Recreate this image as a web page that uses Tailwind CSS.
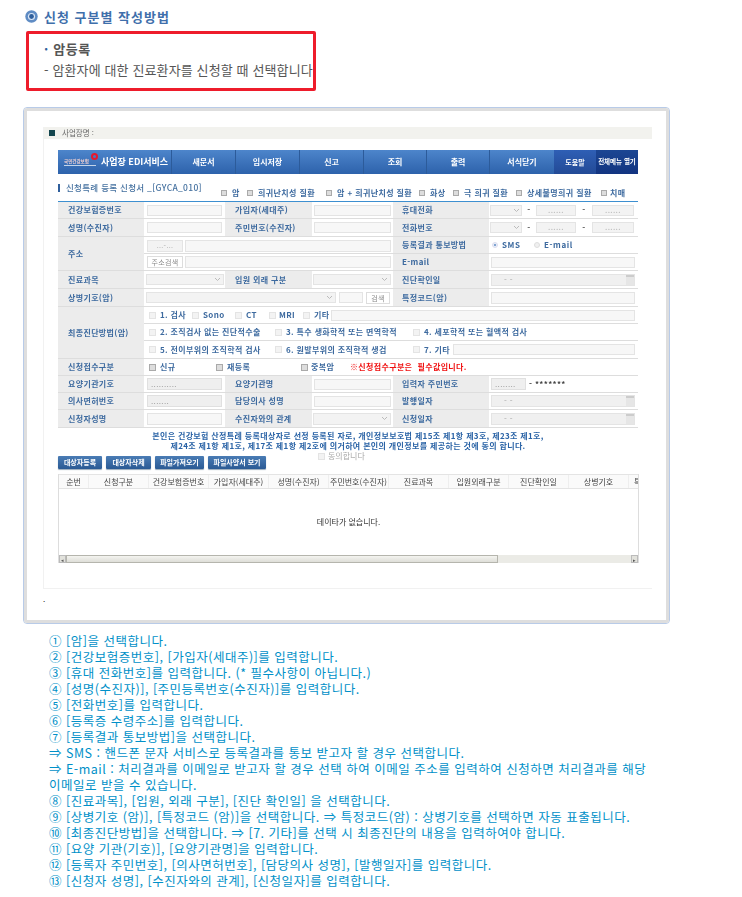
<!DOCTYPE html>
<html lang="ko">
<head>
    <meta charset="UTF-8">
    <title>신청 구분별 작성방법</title>
    <script src="https://cdn.jsdelivr.net/npm/@tailwindcss/browser@4"></script>
</head>
<body class="bg-white font-['Noto_Sans_CJK_KR','Noto_Sans',sans-serif] overflow-hidden">
    <div class="w-[742px] h-[897px] pl-[23px] pt-[8px]">
        <!-- Heading -->
        <div class="flex items-center h-[16px] pl-[2px] gap-[6px]">
            <svg width="13" height="13" viewBox="0 0 13 13"><circle cx="6.5" cy="6.5" r="6.2" fill="#5f8cc4"/><circle cx="6.5" cy="6.5" r="3.6" fill="#dbe6f5"/><circle cx="6.5" cy="6.5" r="2.4" fill="#2f5f9c"/></svg>
            <h2 class="text-[13px] leading-none font-bold tracking-[1px] text-[#3f6fab]">신청 구분별 작성방법</h2>
        </div>

        <!-- Red box -->
        <div class="ml-[3px] mt-[7px] w-[290px] h-[60px] border-[3px] border-[#ee1c2b] rounded-[2px] pl-[15px] pt-[4px] text-[#555]">
            <p class="text-[13px] font-bold leading-[21px] whitespace-nowrap"><span class="text-[#2f5f9c] mr-[5px]">·</span><span class="tracking-[0.5px]">암등록</span></p>
            <p class="text-[13px] leading-[21px] tracking-[0.12px] whitespace-nowrap">- 암환자에 대한 진료환자를 신청할 때 선택합니다</p>
        </div>

        <!-- Screenshot frame -->
        <div class="mt-[16px] w-[647px] h-[517px] rounded-[4px] border border-[#b8cbe8]">
            <div class="h-full border-[3px] border-t-[3px] border-[#dedede] rounded-[3px] pt-[16px] pl-[16px] bg-white">
                <div class="w-[609px] h-[462px] border-b border-l border-[#f1f1f1] blur-[0.3px]">
                    <div class="h-[12px] bg-[#f2f2ee] flex items-center pl-[5px] gap-[7px] text-[7.5px] text-[#666]">
                        <span class="w-[6px] h-[6px] bg-[#14464f]"></span><span>사업장명 :</span>
                    </div>

                    <div class="pl-[14px] pt-[11px]">
                        <!-- Nav -->
                        <nav class="w-[580px] h-[24px] flex text-white font-bold text-[8px] bg-gradient-to-b from-[#4d85cb] to-[#2d62ab]">
                            <div class="w-[114px] flex items-center pl-[6px] border-r border-[#2c5b9a] relative">
                                <span class="text-[4.5px] text-[#f0d0d0] w-[32px] border-b border-white/70 whitespace-nowrap">국민건강보험</span>
                                <span class="absolute left-[33px] top-[3px] w-[7px] h-[7px] rounded-full border-2 border-[#e8182c]"></span>
                                <span class="ml-[5px] text-[9px] whitespace-nowrap">사업장 EDI서비스</span>
                            </div>
                            <div class="w-[64px] flex items-center justify-center border-r border-[#2c5b9a]">새문서</div>
                            <div class="w-[64px] flex items-center justify-center border-r border-[#2c5b9a]">임시저장</div>
                            <div class="w-[64px] flex items-center justify-center border-r border-[#2c5b9a]">신고</div>
                            <div class="w-[63px] flex items-center justify-center border-r border-[#2c5b9a]">조회</div>
                            <div class="w-[63px] flex items-center justify-center border-r border-[#2c5b9a]">출력</div>
                            <div class="w-[64px] flex items-center justify-center">서식닫기</div>
                            <div class="w-[42px] flex items-center justify-center text-[7px] bg-gradient-to-b from-[#2f5fb5] to-[#234a96]">도움말</div>
                            <div class="w-[42px] flex items-center justify-center text-[6.5px] whitespace-nowrap bg-gradient-to-b from-[#1c4693] to-[#123480]">전체메뉴 열기</div>
                        </nav>

                        <!-- Title + filter checkboxes -->
                        <div class="w-[580px] h-[27px] flex items-center text-[8px] font-bold text-[#3d6a9f] whitespace-nowrap tracking-[0.4px]">
                            <span class="w-[2px] h-[8px] bg-[#2f5f9c] mr-[6px]"></span>
                            <span class="font-medium text-[8.5px] tracking-[0.3px] text-[#44709f] w-[155px]">신청특례 등록 신청서 _[GYCA_010]</span>
                            <div class="flex items-center pt-[10px]">
                                <span class="w-[6px] h-[6px] bg-[#ddd] border border-[#aaa] mr-[5px]"></span><span class="w-[15px]">암</span>
                                <span class="w-[6px] h-[6px] bg-[#ddd] border border-[#aaa] mr-[5px]"></span><span class="w-[68px]">희귀난치성 질환</span>
                                <span class="w-[6px] h-[6px] bg-[#ddd] border border-[#aaa] mr-[5px]"></span><span class="w-[82px]">암 + 희귀난치성 질환</span>
                                <span class="w-[6px] h-[6px] bg-[#ddd] border border-[#aaa] mr-[5px]"></span><span class="w-[23px]">화상</span>
                                <span class="w-[6px] h-[6px] bg-[#ddd] border border-[#aaa] mr-[5px]"></span><span class="w-[52px]">극 희귀 질환</span>
                                <span class="w-[6px] h-[6px] bg-[#ddd] border border-[#aaa] mr-[5px]"></span><span class="w-[74px]">상세불명희귀 질환</span>
                                <span class="w-[6px] h-[6px] bg-[#ddd] border border-[#aaa] mr-[3px]"></span><span>치매</span>
                            </div>
                        </div>

                        <!-- Form table -->
                        <table class="w-[580px] table-fixed border-collapse border-t border-t-[#3d8fd0] text-[8px] font-bold text-[#3d6a9f] tracking-[0.35px]">
                            <colgroup><col class="w-[86px]"><col class="w-[81px]"><col class="w-[87px]"><col class="w-[81px]"><col class="w-[96px]"><col class="w-[149px]"></colgroup>
                            <tbody>
                                <tr class="h-[17px] border-b border-[#ddd]">
                                    <th class="bg-[#ececec] text-left pl-[10px] font-bold">건강보험증번호</th>
                                    <td class="px-[3px]"><div class="h-[11px] bg-[#f7f7f7] border border-[#e4e4e4]"></div></td>
                                    <th class="bg-[#ececec] text-left pl-[10px] font-bold">가입자(세대주)</th>
                                    <td class="px-[2px]"><div class="h-[11px] bg-[#f7f7f7] border border-[#e4e4e4]"></div></td>
                                    <th class="bg-[#ececec] text-left pl-[9px] font-bold">휴대전화</th>
                                    <td class="pl-[1px]">
                                        <div class="flex items-center">
                                            <div class="w-[32px] h-[11px] bg-[#f3f3f3] border border-[#e4e4e4] flex justify-end items-center pr-[1px]"><svg width="7" height="5" viewBox="0 0 7 5"><path d="M1 1l2.5 2.5L6 1" fill="none" stroke="#bbb"/></svg></div>
                                            <span class="w-[14px] text-center text-[#555]">-</span>
                                            <div class="w-[40px] h-[11px] bg-[#f3f3f3] border border-[#e4e4e4] text-center text-[#bbb] text-[7px] leading-[9px]">......</div>
                                            <span class="w-[16px] text-center text-[#555]">-</span>
                                            <div class="w-[42px] h-[11px] bg-[#f3f3f3] border border-[#e4e4e4] text-center text-[#bbb] text-[7px] leading-[9px]">......</div>
                                        </div>
                                    </td>
                                </tr>
                                <tr class="h-[18px] border-b border-[#ddd]">
                                    <th class="bg-[#ececec] text-left pl-[10px] font-bold">성명(수진자)</th>
                                    <td class="px-[3px]"><div class="h-[11px] bg-[#f7f7f7] border border-[#e4e4e4]"></div></td>
                                    <th class="bg-[#ececec] text-left pl-[10px] font-bold">주민번호(수진자)</th>
                                    <td class="px-[2px]"><div class="h-[11px] bg-[#f7f7f7] border border-[#e4e4e4]"></div></td>
                                    <th class="bg-[#ececec] text-left pl-[9px] font-bold">전화번호</th>
                                    <td class="pl-[1px]">
                                        <div class="flex items-center">
                                            <div class="w-[32px] h-[11px] bg-[#f3f3f3] border border-[#e4e4e4] flex justify-end items-center pr-[1px]"><svg width="7" height="5" viewBox="0 0 7 5"><path d="M1 1l2.5 2.5L6 1" fill="none" stroke="#bbb"/></svg></div>
                                            <span class="w-[14px] text-center text-[#555]">-</span>
                                            <div class="w-[40px] h-[11px] bg-[#f3f3f3] border border-[#e4e4e4] text-center text-[#bbb] text-[7px] leading-[9px]">......</div>
                                            <span class="w-[16px] text-center text-[#555]">-</span>
                                            <div class="w-[42px] h-[11px] bg-[#f3f3f3] border border-[#e4e4e4] text-center text-[#bbb] text-[7px] leading-[9px]">......</div>
                                        </div>
                                    </td>
                                </tr>
                                <tr class="h-[17px] border-b border-[#ddd]">
                                    <th rowspan="2" class="bg-[#ececec] text-left pl-[10px] font-bold">주소</th>
                                    <td colspan="3" class="pl-[3px] pr-[2px]">
                                        <div class="flex gap-[2px] pt-[2px]">
                                            <div class="w-[36px] h-[12px] bg-[#f3f3f3] border border-[#e4e4e4] text-center text-[#aaa] font-normal text-[7px] leading-[9px]">...-...</div>
                                            <div class="flex-1 h-[12px] bg-[#f7f7f7] border border-[#e4e4e4]"></div>
                                        </div>
                                    </td>
                                    <th class="bg-[#ececec] text-left pl-[9px] font-bold">등록결과 통보방법</th>
                                    <td class="pl-[3px]">
                                        <div class="flex items-center font-normal text-[8px] text-[#3d6a9f] tracking-[0.6px]">
                                            <span class="w-[6px] h-[6px] rounded-full bg-[#e8eef8] border border-[#dde] flex items-center justify-center mr-[4px]"><span class="w-[2px] h-[2px] rounded-full bg-[#5f8cc4]"></span></span>
                                            <span class="w-[32px] font-bold">SMS</span>
                                            <span class="w-[6px] h-[6px] rounded-full bg-[#f0f0f0] border border-[#ddd] mr-[4px]"></span>
                                            <span class="font-bold">E-mail</span>
                                        </div>
                                    </td>
                                </tr>
                                <tr class="h-[17px] border-b border-[#ddd]">
                                    <td colspan="3" class="pl-[3px] pr-[2px]">
                                        <div class="flex gap-[2px]">
                                            <div class="w-[36px] h-[12px] bg-white border border-[#ddd] text-center text-[#888] font-normal text-[7px] leading-[10px] whitespace-nowrap">주소검색</div>
                                            <div class="flex-1 h-[12px] bg-[#f7f7f7] border border-[#e4e4e4]"></div>
                                        </div>
                                    </td>
                                    <th class="bg-[#ececec] text-left pl-[9px] font-bold">E-mail</th>
                                    <td class="px-[2px]"><div class="w-[144px] h-[11px] bg-[#f7f7f7] border border-[#e4e4e4]"></div></td>
                                </tr>
                                <tr class="h-[18px] border-b border-[#ddd]">
                                    <th class="bg-[#ececec] text-left pl-[10px] font-bold">진료과목</th>
                                    <td class="px-[2px]"><div class="w-[78px] h-[11px] bg-[#f3f3f3] border border-[#e4e4e4] flex justify-end items-center pr-[2px]"><svg width="7" height="5" viewBox="0 0 7 5"><path d="M1 1l2.5 2.5L6 1" fill="none" stroke="#bbb"/></svg></div></td>
                                    <th class="bg-[#ececec] text-left pl-[10px] font-bold">입원 외래 구분</th>
                                    <td class="pl-[1px] pr-[2px]"><div class="h-[11px] bg-[#f3f3f3] border border-[#e4e4e4] flex justify-end items-center pr-[2px]"><svg width="7" height="5" viewBox="0 0 7 5"><path d="M1 1l2.5 2.5L6 1" fill="none" stroke="#bbb"/></svg></div></td>
                                    <th class="bg-[#ececec] text-left pl-[9px] font-bold">진단확인일</th>
                                    <td class="px-[2px]"><div class="w-[144px] h-[12px] bg-[#f0f0f0] border border-[#e4e4e4] flex justify-between items-center pl-[12px] text-[#aaa] font-normal">- -<span class="w-[8px] h-[10px] bg-[#e6e6e6] border-t-2 border-[#ccc]"></span></div></td>
                                </tr>
                                <tr class="h-[18px] border-b border-[#ddd]">
                                    <th class="bg-[#ececec] text-left pl-[10px] font-bold">상병기호(암)</th>
                                    <td colspan="3" class="pl-[2px]">
                                        <div class="flex items-center">
                                            <div class="w-[190px] h-[11px] bg-[#f3f3f3] border border-[#e4e4e4] flex justify-end items-center pr-[2px]"><svg width="7" height="5" viewBox="0 0 7 5"><path d="M1 1l2.5 2.5L6 1" fill="none" stroke="#bbb"/></svg></div>
                                            <div class="ml-[3px] w-[24px] h-[11px] bg-[#f7f7f7] border border-[#e4e4e4]"></div>
                                            <div class="ml-[3px] w-[24px] h-[12px] bg-white border border-[#ddd] text-center text-[#888] font-normal text-[7px] leading-[10px]">검색</div>
                                        </div>
                                    </td>
                                    <th class="bg-[#ececec] text-left pl-[9px] font-bold">특정코드(암)</th>
                                    <td class="px-[2px]"><div class="w-[144px] h-[12px] bg-[#f7f7f7] border border-[#e4e4e4]"></div></td>
                                </tr>
                                <tr class="h-[17px] border-b border-[#ddd]">
                                    <th rowspan="3" class="bg-[#ececec] text-left pl-[10px] font-bold">최종진단방법(암)</th>
                                    <td colspan="5" class="pl-[5px] pr-[3px]">
                                        <div class="flex items-center whitespace-nowrap">
                                            <span class="w-[7px] h-[7px] bg-[#f3f3f3] border border-[#e4e4e4] mr-[4px]"></span><span class="w-[32px]">1. 검사</span>
                                            <span class="w-[7px] h-[7px] bg-[#f3f3f3] border border-[#e4e4e4] mr-[4px]"></span><span class="w-[32px]">Sono</span>
                                            <span class="w-[7px] h-[7px] bg-[#f3f3f3] border border-[#e4e4e4] mr-[4px]"></span><span class="w-[23px]">CT</span>
                                            <span class="w-[7px] h-[7px] bg-[#f3f3f3] border border-[#e4e4e4] mr-[3px]"></span><span class="w-[24px]">MRI</span>
                                            <span class="w-[7px] h-[7px] bg-[#f3f3f3] border border-[#e4e4e4] mr-[4px]"></span><span class="w-[17px]">기타</span>
                                            <div class="flex-1 h-[11px] bg-[#f7f7f7] border border-[#e4e4e4]"></div>
                                        </div>
                                    </td>
                                </tr>
                                <tr class="h-[17px] border-b border-[#ddd]">
                                    <td colspan="5" class="pl-[5px]">
                                        <div class="flex items-center whitespace-nowrap">
                                            <span class="w-[7px] h-[7px] bg-[#f3f3f3] border border-[#e4e4e4] mr-[4px]"></span><span class="w-[115px]">2. 조직검사 없는 진단적수술</span>
                                            <span class="w-[7px] h-[7px] bg-[#f3f3f3] border border-[#e4e4e4] mr-[4px]"></span><span class="w-[127px]">3. 특수 생화학적 또는 면역학적</span>
                                            <span class="w-[7px] h-[7px] bg-[#f3f3f3] border border-[#e4e4e4] mr-[4px]"></span><span>4. 세포학적 또는 혈액적 검사</span>
                                        </div>
                                    </td>
                                </tr>
                                <tr class="h-[18px] border-b border-[#ddd]">
                                    <td colspan="5" class="pl-[5px] pr-[3px]">
                                        <div class="flex items-center whitespace-nowrap">
                                            <span class="w-[7px] h-[7px] bg-[#f3f3f3] border border-[#e4e4e4] mr-[4px]"></span><span class="w-[115px]">5. 전이부위의 조직학적 검사</span>
                                            <span class="w-[7px] h-[7px] bg-[#f3f3f3] border border-[#e4e4e4] mr-[4px]"></span><span class="w-[127px]">6. 원발부위의 조직학적 생검</span>
                                            <span class="w-[7px] h-[7px] bg-[#f3f3f3] border border-[#e4e4e4] mr-[4px]"></span><span class="w-[29px]">7. 기타</span>
                                            <div class="flex-1 h-[11px] bg-[#f7f7f7] border border-[#e4e4e4]"></div>
                                        </div>
                                    </td>
                                </tr>
                                <tr class="h-[17px] border-b border-[#ddd]">
                                    <th class="bg-[#ececec] text-left pl-[10px] font-bold">신청접수구분</th>
                                    <td colspan="5" class="pl-[5px]">
                                        <div class="flex items-center whitespace-nowrap">
                                            <span class="w-[7px] h-[7px] bg-[#ddd] border border-[#aaa] mr-[4px]"></span><span class="w-[56px]">신규</span>
                                            <span class="w-[7px] h-[7px] bg-[#ddd] border border-[#aaa] mr-[4px]"></span><span class="w-[74px]">재등록</span>
                                            <span class="w-[7px] h-[7px] bg-[#ddd] border border-[#aaa] mr-[3px]"></span><span class="w-[39px]">중복암</span>
                                            <span class="text-[#f01010]">※신청접수구분은&nbsp; 필수값입니다.</span>
                                        </div>
                                    </td>
                                </tr>
                                <tr class="h-[17px] border-b border-[#ddd]">
                                    <th class="bg-[#ececec] text-left pl-[10px] font-bold">요양기관기호</th>
                                    <td class="px-[3px]"><div class="h-[12px] bg-[#efefef] border border-[#e0e0e0] pl-[3px] text-[#999] font-normal leading-[10px]">..........</div></td>
                                    <th class="bg-[#ececec] text-left pl-[10px] font-bold">요양기관명</th>
                                    <td class="px-[2px]"><div class="h-[11px] bg-[#f7f7f7] border border-[#e4e4e4]"></div></td>
                                    <th class="bg-[#ececec] text-left pl-[9px] font-bold">입력자 주민번호</th>
                                    <td class="pl-[2px]"><div class="flex items-center text-[#444]"><div class="w-[35px] h-[12px] bg-[#efefef] border border-[#e0e0e0] pl-[3px] text-[#999] font-normal leading-[10px]">........</div><span class="ml-[3px]">- *******</span></div></td>
                                </tr>
                                <tr class="h-[17px] border-b border-[#ddd]">
                                    <th class="bg-[#ececec] text-left pl-[10px] font-bold">의사면허번호</th>
                                    <td class="px-[3px]"><div class="h-[12px] bg-[#efefef] border border-[#e0e0e0] pl-[3px] text-[#999] font-normal leading-[10px]">.......</div></td>
                                    <th class="bg-[#ececec] text-left pl-[10px] font-bold">담당의사 성명</th>
                                    <td class="px-[2px]"><div class="h-[11px] bg-[#f7f7f7] border border-[#e4e4e4]"></div></td>
                                    <th class="bg-[#ececec] text-left pl-[9px] font-bold">발행일자</th>
                                    <td class="px-[2px]"><div class="w-[144px] h-[12px] bg-[#f0f0f0] border border-[#e4e4e4] flex justify-between items-center pl-[12px] text-[#aaa] font-normal">- -<span class="w-[8px] h-[10px] bg-[#e6e6e6] border-t-2 border-[#ccc]"></span></div></td>
                                </tr>
                                <tr class="h-[18px] border-b border-[#ddd]">
                                    <th class="bg-[#ececec] text-left pl-[10px] font-bold">신청자성명</th>
                                    <td class="px-[3px]"><div class="h-[12px] bg-[#f7f7f7] border border-[#e4e4e4]"></div></td>
                                    <th class="bg-[#ececec] text-left pl-[10px] font-bold">수진자와의 관계</th>
                                    <td class="pl-[1px] pr-[2px]"><div class="h-[12px] bg-[#f3f3f3] border border-[#e4e4e4] flex justify-end items-center pr-[2px]"><svg width="7" height="5" viewBox="0 0 7 5"><path d="M1 1l2.5 2.5L6 1" fill="none" stroke="#bbb"/></svg></div></td>
                                    <th class="bg-[#ececec] text-left pl-[9px] font-bold">신청일자</th>
                                    <td class="px-[2px]"><div class="w-[144px] h-[12px] bg-[#f0f0f0] border border-[#e4e4e4] flex justify-between items-center pl-[12px] text-[#aaa] font-normal">- -<span class="w-[8px] h-[10px] bg-[#e6e6e6] border-t-2 border-[#ccc]"></span></div></td>
                                </tr>
                            </tbody>
                        </table>

                        <!-- Agreement -->
                        <div class="w-[580px] pt-[3px] text-center text-[8px] leading-[10px] font-bold text-[#2a63a6] tracking-[0.35px] whitespace-nowrap">
                            <p>본인은 건강보험 산정특례 등록대상자로 선정 등록된 자로, 개인정보보호법 제15조 제1항 제3호, 제23조 제1호,</p>
                            <p>제24조 제1항 제1호, 제17조 제1항 제2호에 의거하여 본인의 개인정보를 제공하는 것에 동의 합니다.</p>
                        </div>
                        <div class="w-[580px] h-[10px] mb-[-5px] flex items-center pl-[260px] text-[8px] text-[#aaa] gap-[3px]">
                            <span class="w-[7px] h-[7px] bg-[#f3f3f3] border border-[#e4e4e4]"></span><span>동의합니다</span>
                        </div>

                        <!-- Buttons -->
                        <div class="flex gap-[4px] h-[13px] text-[7px] leading-[13px] text-center text-white font-bold whitespace-nowrap">
                            <div class="w-[44px] rounded-[1px] shadow-[0_1px_1px_#9ab] bg-gradient-to-b from-[#4a7cb5] to-[#2a5a94]">대상자등록</div>
                            <div class="w-[45px] rounded-[1px] shadow-[0_1px_1px_#9ab] bg-gradient-to-b from-[#4a7cb5] to-[#2a5a94]">대상자삭제</div>
                            <div class="w-[49px] rounded-[1px] shadow-[0_1px_1px_#9ab] bg-gradient-to-b from-[#4a7cb5] to-[#2a5a94]">파일가져오기</div>
                            <div class="w-[58px] rounded-[1px] shadow-[0_1px_1px_#9ab] bg-gradient-to-b from-[#4a7cb5] to-[#2a5a94]">파일사양서 보기</div>
                        </div>

                        <!-- Result grid -->
                        <div class="mt-[5px] w-[581px] h-[89px] border-x border-[#ddd] flex flex-col overflow-hidden">
                            <div class="flex h-[15px] shrink-0 bg-[#fafafa] border-y border-[#e4e4e4] text-[8px] leading-[13px] text-[#444] text-center whitespace-nowrap">
                                <div class="w-[30px] shrink-0 border-r border-[#eee]">순번</div>
                                <div class="w-[60px] shrink-0 border-r border-[#eee]">신청구분</div>
                                <div class="w-[60px] shrink-0 border-r border-[#eee]">건강보험증번호</div>
                                <div class="w-[60px] shrink-0 border-r border-[#eee]">가입자(세대주)</div>
                                <div class="w-[60px] shrink-0 border-r border-[#eee]">성명(수진자)</div>
                                <div class="w-[60px] shrink-0 border-r border-[#eee]">주민번호(수진자)</div>
                                <div class="w-[60px] shrink-0 border-r border-[#eee]">진료과목</div>
                                <div class="w-[60px] shrink-0 border-r border-[#eee]">입원외래구분</div>
                                <div class="w-[60px] shrink-0 border-r border-[#eee]">진단확인일</div>
                                <div class="w-[60px] shrink-0 border-r border-[#eee]">상병기호</div>
                                <div class="w-[60px] shrink-0 pl-[5px] text-left">특</div>
                            </div>
                            <div class="flex-1 flex items-center justify-center text-[8px] text-[#333] pb-[1px]">데이타가 없습니다.</div>
                            <!-- Scrollbar -->
                            <div class="h-[8px] shrink-0 bg-[#ebebe6] flex items-stretch">
                                <span class="w-[7px] bg-[#e2e2dc] border border-[#bbb] flex items-center justify-center text-[5px] leading-none text-[#555]">◂</span>
                                <span class="w-[432px] bg-gradient-to-b from-[#f4f4f0] to-[#deded8] border border-[#b5b5ad]"></span>
                                <span class="flex-1"></span>
                                <span class="w-[7px] bg-[#e2e2dc] border border-[#bbb] flex items-center justify-center text-[5px] leading-none text-[#555]">▸</span>
                            </div>
                        </div>
                    </div>
                </div>
                <p class="text-[8px] leading-none pt-[6px] text-[#222]">.</p>
            </div>
        </div>

        <!-- Steps -->
        <div class="mt-[9px] pl-[26px] text-[12.5px] leading-[16px] tracking-[0.5px] text-[#0090c8] whitespace-nowrap">
            <p>① [암]을 선택합니다.</p>
            <p>② [건강보험증번호], [가입자(세대주)]를 입력합니다.</p>
            <p>③ [휴대 전화번호]를 입력합니다. (* 필수사항이 아닙니다.)</p>
            <p>④ [성명(수진자)], [주민등록번호(수진자)]를 입력합니다.</p>
            <p>⑤ [전화번호]를 입력합니다.</p>
            <p>⑥ [등록증 수령주소]를 입력합니다.</p>
            <p>⑦ [등록결과 통보방법]을 선택합니다.</p>
            <p>⇒ SMS : 핸드폰 문자 서비스로 등록결과를 통보 받고자 할 경우 선택합니다.</p>
            <p>⇒ E-mail : 처리결과를 이메일로 받고자 할 경우 선택 하여 이메일 주소를 입력하여 신청하면 처리결과를 해당</p>
            <p>이메일로 받을 수 있습니다.</p>
            <p>⑧ [진료과목], [입원, 외래 구분], [진단 확인일] 을 선택합니다.</p>
            <p>⑨ [상병기호 (암)], [특정코드 (암)]을 선택합니다. ⇒ 특정코드(암) : 상병기호를 선택하면 자동 표출됩니다.</p>
            <p>⑩ [최종진단방법]을 선택합니다. ⇒ [7. 기타]를 선택 시 최종진단의 내용을 입력하여야 합니다.</p>
            <p>⑪ [요양 기관(기호)], [요양기관명]을 입력합니다.</p>
            <p>⑫ [등록자 주민번호], [의사면허번호], [담당의사 성명], [발행일자]를 입력합니다.</p>
            <p>⑬ [신청자 성명], [수진자와의 관계], [신청일자]를 입력합니다.</p>
        </div>
    </div>
</body>
</html>
